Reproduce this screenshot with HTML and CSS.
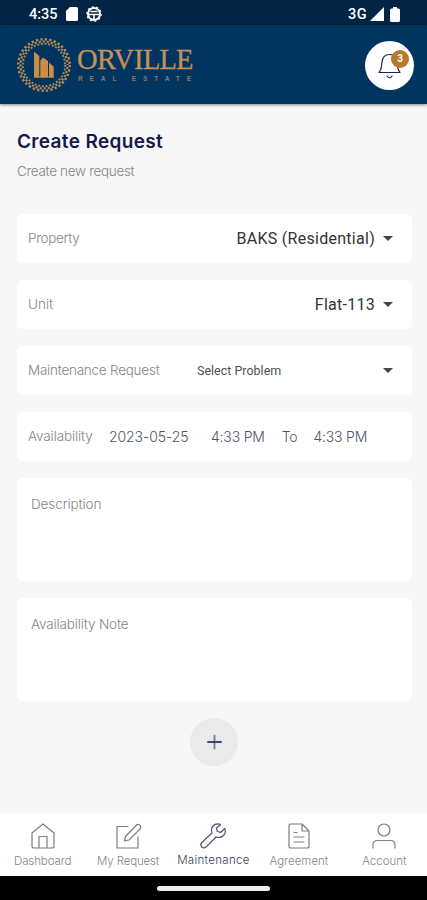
FILE: index.html
```html
<!DOCTYPE html>
<html lang="en">
<head>
<meta charset="utf-8">
<title>Create Request</title>
<link rel="stylesheet" href="styles.css">
</head>
<body>
<div class="app">
  <div class="status">
    <span class="clock">4:35</span>
    <svg class="sd" width="12" height="14" viewBox="0 0 12 14"><path d="M4 0H10.500Q12 0 12 1.500V12.500Q12 14 10.500 14H1.500Q0 14 0 12.500V4Z" fill="#fff"/></svg>
    <svg class="globe" width="16" height="16" viewBox="0 0 16 16" fill="none" stroke="#fff"><circle cx="8" cy="8" r="6" stroke-width="2"/><path d="M2 8.500H14M8 8V14M4.500 5.500H11.500" stroke-width="1.600"/><circle cx="8" cy="8" r="7.200" stroke-width="1.200" stroke-dasharray="2 2.500"/></svg>
    <span class="net">3G</span>
    <svg class="signal" width="14" height="14" viewBox="0 0 14 14"><path d="M14 0V14H0Z" fill="#fff"/></svg>
    <svg class="battery" width="10" height="15" viewBox="0 0 10 15"><path d="M3 0H7V1.500H8.500Q10 1.500 10 3V13.500Q10 15 8.500 15H1.500Q0 15 0 13.500V3Q0 1.500 1.500 1.500H3Z" fill="#fff"/></svg>
  </div>
  <header class="header">
    <svg class="logo" width="190" height="58" viewBox="0 0 190 58">
      <g fill="none" stroke="#b98a4e">
        <circle cx="29" cy="29" r="25.700" stroke-width="2.400" stroke-dasharray="2.300 2.185"/>
        <circle cx="29" cy="29" r="23.400" stroke-width="2.200" stroke-dasharray="2.090 1.994" stroke-dashoffset="2"/>
        <circle cx="29" cy="29" r="21.200" stroke-width="1.900" stroke-dasharray="1.900 1.800"/>
      </g>
      <g fill="#c98d45"><path d="M19 15.500L24.300 20V41.500H19ZM25.300 41.500V24.500L28 21.500L33 25V41.500ZM34 41.500V26.500L38.700 30.500V41.500Z"/></g>
      <path d="M19 41H39" stroke="#c98d45"/>
      <text class="brand" x="62 82 98.500 119 128 144.500 161" y="32.500">ORVILLE</text>
      <text class="tagline" x="63" y="45" textLength="113">REAL ESTATE</text>
    </svg>
    <div class="bell">
      <svg width="48" height="48" viewBox="0 0 48 48" fill="none" stroke="#1c2450" stroke-width="1.200" stroke-linecap="round" stroke-linejoin="round"><path d="M14 31.500C16.500 28.500 16.500 27 16.800 22C17.200 17 19.500 13.500 24.500 13.500S31.500 17 32 22C32.300 27 32.500 28.500 35 31.500ZM22 35Q24.500 38.500 27 35"/></svg>
      <span class="badge">3</span>
    </div>
  </header>
  <main class="main">
    <h1 class="title">Create Request</h1>
    <p class="subtitle">Create new request</p>
    <div class="form">
      <div class="card row"><span class="label property">Property</span><span class="value baks">BAKS (Residential)</span><i class="caret"></i></div>
      <div class="card row"><span class="label">Unit</span><span class="value flat">Flat-113</span><i class="caret"></i></div>
      <div class="card row"><span class="label request">Maintenance Request</span><span class="problem">Select Problem</span><i class="caret"></i></div>
      <div class="card row"><span class="label avail">Availability</span><span class="date">2023-05-25</span><span class="time from">4:33 PM</span><span class="to">To</span><span class="time">4:33 PM</span></div>
      <div class="card area"><span class="label desc">Description</span></div>
      <div class="card area"><span class="label note">Availability Note</span></div>
    </div>
    <div class="add"><svg width="16" height="16" viewBox="0 0 16 16" fill="none" stroke-width="1.800"><path d="M8.500 .8V15.200" stroke="#777c92"/><path d="M1.300 8H15.700" stroke="#263b60"/></svg></div>
  </main>
  <nav class="nav">
    <div class="item"><svg viewBox="0 0 28 28"><path d="M3 11L14 2L25 11V24Q25 26 23 26H5Q3 26 3 24ZM10 26V14.500H18V26"/></svg><span class="n1">Dashboard</span></div>
    <div class="item"><svg viewBox="0 0 28 28"><path d="M14 4.500H3V26H24V15M10.500 19L11.500 14.500L22.500 3Q24 1.500 26 3.500Q27.500 5 26 7L15 18Z"/></svg><span class="n2">My Request</span></div>
    <div class="item active"><svg viewBox="0 0 28 28"><path d="M21.500 2.500Q17 .8 14 4Q11.500 7 13 11L2.800 20.500Q.8 22.800 2.800 25Q5 27 7.300 24.800L17 15Q21.500 16.500 24.500 13.500Q27.300 10.500 25.800 6.500L21.800 10.300L18.300 9.500L17.500 6.300Z"/></svg><span class="n3">Maintenance</span></div>
    <div class="item"><svg viewBox="0 0 28 28"><path d="M17 2H6Q4 2 4 4V24Q4 26 6 26H22Q24 26 24 24V9ZM17 2V9H24M9 10.500H12M9 15H19M9 20H19"/></svg><span class="n4">Agreement</span></div>
    <div class="item"><svg viewBox="0 0 28 28"><circle cx="14" cy="8" r="6"/><path d="M3 26V23Q3 18.500 7.500 18.500H20.500Q25 18.500 25 23V26"/></svg><span class="n5">Account</span></div>
  </nav>
  <div class="home"><i class="pill"></i></div>
</div>
</body>
</html>
```
FILE: styles.css
```css
* { box-sizing: border-box; }
body { margin: 0; font-family: Inter, sans-serif; }
.app { display: flex; flex-direction: column; width: 427px; height: 900px; background: #f7f7f7; overflow: hidden; white-space: nowrap; }
svg { display: block; flex: none; overflow: visible; }
.status { height: 25px; flex: none; background: #022545; display: flex; align-items: center; padding: 3px 27px 0 29px; color: #fff; font: 500 14.5px Roboto, sans-serif; }
.sd { margin-left: 8px; }
.globe { margin-left: 8px; }
.net { margin-left: auto; letter-spacing: .4px; }
.signal { margin-left: 3px; }
.battery { margin-left: 6px; }
.header { height: 79px; flex: none; background: #01345f; display: flex; align-items: center; justify-content: space-between; padding: 1px 13px 0 15px; box-shadow: 0 1px 3px rgba(0,0,0,.45); }
.brand { font: 28.5px "Liberation Serif", serif; fill: #c0915b; stroke: #c0915b; stroke-width: .3px; }
.tagline { font: bold 6.5px "Liberation Sans", sans-serif; fill: #8b7965; }
.bell { width: 49px; height: 49px; border-radius: 50%; background: #fff; position: relative; }
.badge { position: absolute; left: 26px; top: 9px; width: 18px; height: 18px; border-radius: 50%; background: #b57a2b; color: #fff; font: bold 10px/18px Roboto, sans-serif; text-align: center; }
.main { flex: 1; padding: 25px 15px 0 17px; }
.title { margin: 0; font-size: 19px; line-height: 26px; font-weight: 600; color: #14194f; letter-spacing: .35px; }
.subtitle { margin: 7px 0 0; font-size: 13.5px; line-height: 18px; font-weight: 300; color: #858585; letter-spacing: -.32px; }
.form { display: flex; flex-direction: column; gap: 17px; margin-top: 33.500px; }
.card { background: #fff; border-radius: 6px; }
.row { height: 49.15px; display: flex; align-items: center; padding: 0 19px 0 11px; }
.label { font-size: 13.5px; font-weight: 300; color: #858585; }
.property { letter-spacing: -.3px; }
.request { width: 132px; letter-spacing: -.24px; }
.avail { width: 65px; letter-spacing: -.12px; }
.value { margin-left: auto; font: 16px Roboto, sans-serif; color: #333; letter-spacing: .27px; }
.caret { border: 5px solid transparent; border-top-color: #444; border-bottom: 0; margin-left: 8px; }
.problem { font: 12.5px Roboto, sans-serif; color: #505050; margin: 0 auto 0 37px; }
.date { margin-left: 16px; width: 81px; font-size: 14px; color: #4d5369; font-weight: 300; letter-spacing: -.1px; }
.time, .to { font-size: 14px; color: #4d5369; font-weight: 300; letter-spacing: -.2px; }
.from { margin-left: 21px; }
.to { margin: 0 16px 0 17px; }
.area { height: 103px; padding: 17px 14px; line-height: 17px; }
.desc { letter-spacing: -.1px; }
.note { letter-spacing: -.15px; }
.add { width: 48px; height: 48px; margin: 17px auto 0 173px; border-radius: 50%; background: #eaeaea; display: grid; place-items: center; }
.nav { height: 63px; flex: none; background: #fff; display: grid; grid-template-columns: repeat(5, 1fr); }
.item { display: flex; flex-direction: column; align-items: center; padding-top: 9px; color: #858585; font-size: 11.5px; line-height: 16px; font-weight: 300; }
.item svg { width: 28px; height: 28px; fill: none; stroke: #7d7d7d; stroke-width: 1.2; stroke-linejoin: round; stroke-linecap: round; margin-bottom: 3px; }
.n1 { letter-spacing: -.1px; }
.n2 { letter-spacing: -.15px; }
.active { color: #35405e; }
.active span { margin-top: -1px; letter-spacing: .33px; }
.active svg { stroke: #4a5270; }
.home { height: 24px; flex: none; background: #000; display: grid; place-items: center; }
.pill { width: 113px; height: 5px; border-radius: 3px; background: #eee; }
```
